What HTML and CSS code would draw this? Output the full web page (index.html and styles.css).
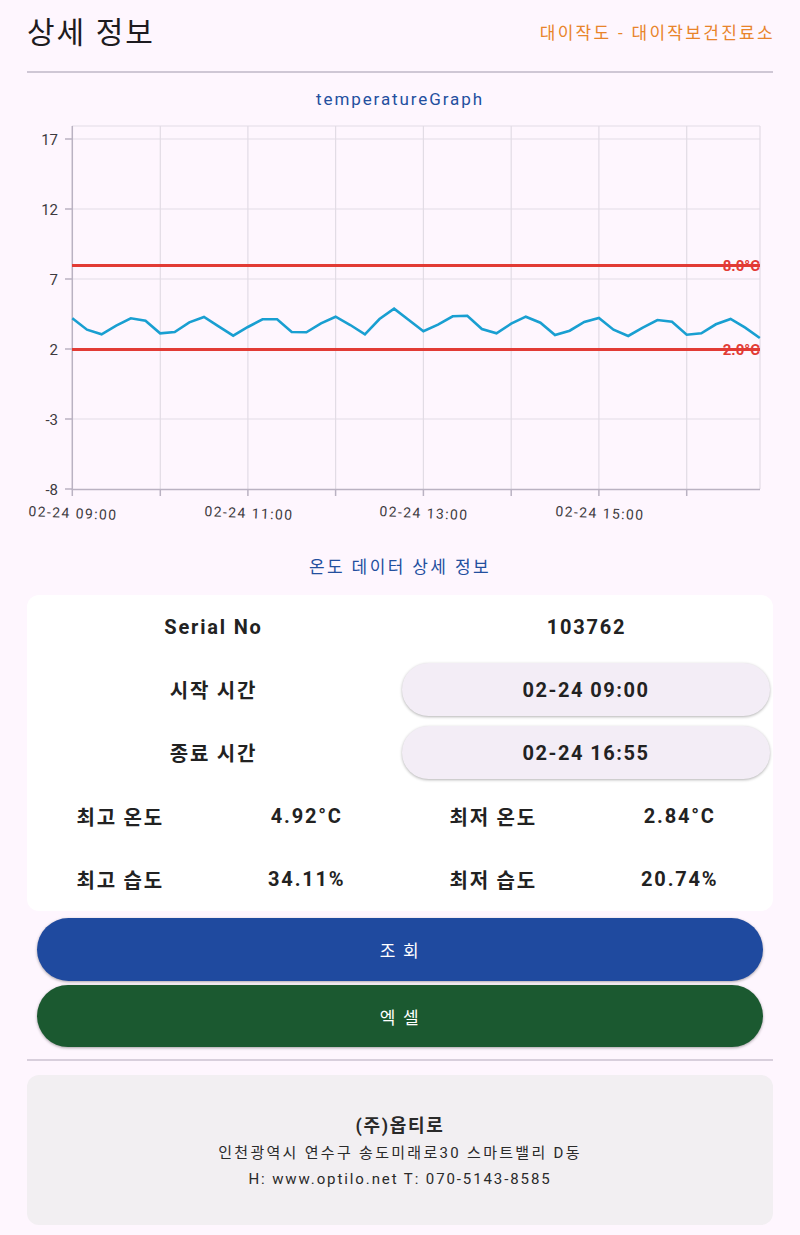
FILE: index.html
```html
<!DOCTYPE html>
<html lang="ko">
<head>
<meta charset="utf-8">
<title>상세 정보</title>
<link rel="stylesheet" href="styles.css">
</head>
<body>
<div class="page">
  <header class="header">
    <h1 class="title">상세 정보</h1>
    <div class="site">대이작도 - 대이작보건진료소</div>
  </header>

  <div class="graph-title">temperatureGraph</div>

  <svg class="chart" width="746" height="420" viewBox="27 112 746 420" xmlns="http://www.w3.org/2000/svg">
    <g class="grid">
      <line x1="72" y1="127" x2="760" y2="127"/>
      <line x1="72" y1="140" x2="760" y2="140"/>
      <line x1="72" y1="210" x2="760" y2="210"/>
      <line x1="72" y1="280" x2="760" y2="280"/>
      <line x1="72" y1="350" x2="760" y2="350"/>
      <line x1="72" y1="420" x2="760" y2="420"/>
      <line x1="160.3" y1="127" x2="160.3" y2="490"/>
      <line x1="247.9" y1="127" x2="247.9" y2="490"/>
      <line x1="335.6" y1="127" x2="335.6" y2="490"/>
      <line x1="423.4" y1="127" x2="423.4" y2="490"/>
      <line x1="511.2" y1="127" x2="511.2" y2="490"/>
      <line x1="598.9" y1="127" x2="598.9" y2="490"/>
      <line x1="686.7" y1="127" x2="686.7" y2="490"/>
      <line x1="760" y1="127" x2="760" y2="490"/>
    </g>
    <g class="axis">
      <line x1="72.3" y1="127" x2="72.3" y2="491"/>
      <line x1="72" y1="490.5" x2="760" y2="490.5"/>
      <line x1="65" y1="140" x2="72" y2="140"/>
      <line x1="65" y1="210" x2="72" y2="210"/>
      <line x1="65" y1="280" x2="72" y2="280"/>
      <line x1="65" y1="350" x2="72" y2="350"/>
      <line x1="65" y1="420" x2="72" y2="420"/>
      <line x1="65" y1="490" x2="72" y2="490"/>
      <line x1="72.3" y1="490" x2="72.3" y2="497"/>
      <line x1="160.3" y1="490" x2="160.3" y2="497"/>
      <line x1="247.9" y1="490" x2="247.9" y2="497"/>
      <line x1="335.6" y1="490" x2="335.6" y2="497"/>
      <line x1="423.4" y1="490" x2="423.4" y2="497"/>
      <line x1="511.2" y1="490" x2="511.2" y2="497"/>
      <line x1="598.9" y1="490" x2="598.9" y2="497"/>
      <line x1="686.7" y1="490" x2="686.7" y2="497"/>
    </g>
    <g class="ylabels">
      <text x="58" y="145.5">17</text>
      <text x="58" y="215.5">12</text>
      <text x="58" y="285.5">7</text>
      <text x="58" y="355.5">2</text>
      <text x="58" y="425.5">-3</text>
      <text x="58" y="495.5">-8</text>
    </g>
    <g class="xlabels">
      <text x="73" y="519" transform="rotate(2.5 72 514)">02-24 09:00</text>
      <text x="249" y="519" transform="rotate(2.5 248 514)">02-24 11:00</text>
      <text x="424" y="519" transform="rotate(2.5 423 514)">02-24 13:00</text>
      <text x="600" y="519" transform="rotate(2.5 599 514)">02-24 15:00</text>
    </g>
    <line class="limit" x1="72" y1="266.5" x2="760" y2="266.5"/>
    <line class="limit" x1="72" y1="350.5" x2="760" y2="350.5"/>
    <polyline class="temp" points="72.3,319.3 87,330.7 101.6,335.3 116.2,326.7 130.8,319.3 145.5,321.7 160.1,334.3 174.7,333 189.3,323.3 204,318 218.6,327.3 233.2,336.7 247.9,328 262.5,320.3 277.1,320.3 291.7,333 306.4,333.3 321,324.3 335.6,317.7 350.3,326 364.9,335.3 379.5,320 394.1,309.7 408.8,321 423.4,332.3 438,325.7 452.7,317.3 467.3,316.7 481.9,330 496.5,334.3 511.2,324.7 525.8,317.7 540.4,323.7 555,336 569.7,331.7 584.3,323 598.9,319 613.5,330.7 628.2,337 642.8,328.7 657.4,321 672,322.7 686.7,335.7 701.3,334.3 715.9,325.3 730.6,320 745.2,328.7 759.8,339"/>
    <text class="limit-label" x="760" y="272">8.0°C</text>
    <text class="limit-label" x="760" y="356">2.0°C</text>
  </svg>

  <div class="section-title">온도 데이터 상세 정보</div>

  <section class="card">
    <div class="row two">
      <div class="cell strong">Serial No</div>
      <div class="cell strong">103762</div>
    </div>
    <div class="row two">
      <div class="cell strong">시작 시간</div>
      <div class="cell"><div class="pill">02-24 09:00</div></div>
    </div>
    <div class="row two">
      <div class="cell strong">종료 시간</div>
      <div class="cell"><div class="pill">02-24 16:55</div></div>
    </div>
    <div class="row four">
      <div class="cell strong">최고 온도</div>
      <div class="cell strong">4.92°C</div>
      <div class="cell strong">최저 온도</div>
      <div class="cell strong">2.84°C</div>
    </div>
    <div class="row four">
      <div class="cell strong">최고 습도</div>
      <div class="cell strong">34.11%</div>
      <div class="cell strong">최저 습도</div>
      <div class="cell strong">20.74%</div>
    </div>
  </section>

  <div class="actions">
    <button class="btn btn-blue" type="button">조 회</button>
    <button class="btn btn-green" type="button">엑 셀</button>
  </div>

  <footer class="footer">
    <div class="company">(주)옵티로</div>
    <div class="addr ko">인천광역시 연수구 송도미래로30 스마트밸리 D동</div>
    <div class="addr">H: www.optilo.net T: 070-5143-8585</div>
  </footer>
</div>
</body>
</html>
```

FILE: styles.css
```css
* { box-sizing: border-box; }

html, body {
  margin: 0;
  padding: 0;
  background: #fef6fe;
}

body {
  font-family: Roboto, "Noto Sans CJK KR", sans-serif;
  color: #222;
}

.page {
  width: 800px;
  padding: 0 27px;
}

.header {
  height: 73px;
  padding-bottom: 6px;
  display: flex;
  align-items: center;
  justify-content: space-between;
  border-bottom: 2px solid #cfc7d5;
}

.title {
  margin: 0;
  font-size: 30px;
  font-weight: 400;
  color: #1d1b20;
  line-height: 36px;
  letter-spacing: 2px;
}

.site {
  font-size: 17px;
  color: #e8842a;
  line-height: 24px;
  letter-spacing: 2.3px;
  margin-right: -2px;
}

.graph-title {
  margin-top: 14px;
  text-align: center;
  font-size: 17px;
  line-height: 24px;
  color: #234f9e;
  letter-spacing: 1.9px;
}

.chart {
  display: block;
}

.grid line {
  stroke: #e2dce5;
  stroke-width: 1.2;
}

.axis line {
  stroke: #bab2c2;
  stroke-width: 1.5;
}

.ylabels text {
  font-family: Roboto, sans-serif;
  font-size: 15px;
  fill: #3d3a40;
  text-anchor: end;
}

.xlabels text {
  font-family: Roboto, sans-serif;
  font-size: 14px;
  fill: #3d3a40;
  text-anchor: middle;
  letter-spacing: 1.4px;
}

.limit {
  stroke: #e23b35;
  stroke-width: 3;
}

.limit-label {
  font-family: Roboto, sans-serif;
  font-size: 15px;
  font-weight: 700;
  fill: #e23b35;
  text-anchor: end;
}

.temp {
  fill: none;
  stroke: #199fd1;
  stroke-width: 2.6;
  stroke-linejoin: miter;
}

.section-title {
  margin-top: 24px;
  text-align: center;
  font-size: 17px;
  line-height: 24px;
  color: #234f9e;
  letter-spacing: 2.4px;
}

.card {
  margin-top: 16px;
  height: 316px;
  background: #ffffff;
  border-radius: 12px;
  display: grid;
  grid-template-rows: repeat(5, 1fr);
}

.row {
  display: grid;
  align-items: center;
}

.row.two { grid-template-columns: 1fr 1fr; }
.row.four { grid-template-columns: repeat(4, 1fr); }

.cell {
  text-align: center;
  font-size: 20px;
  color: #222;
  letter-spacing: 1.8px;
}

.strong { font-weight: 700; }

.pill {
  margin: 0 3px 0 2px;
  height: 53px;
  border-radius: 27px;
  background: #f3edf6;
  box-shadow: 0 1px 3px rgba(0, 0, 0, 0.3);
  display: flex;
  align-items: center;
  justify-content: center;
  font-weight: 700;
  font-size: 20px;
  color: #222;
  letter-spacing: 1.5px;
}

.actions {
  margin-top: 7px;
  padding: 0 10px;
  display: flex;
  flex-direction: column;
  gap: 4px;
  padding-bottom: 12px;
  border-bottom: 2px solid #d8cfdc;
}

.btn {
  height: 63px;
  border: none;
  border-radius: 32px;
  color: #ffffff;
  font-family: Roboto, "Noto Sans CJK KR", sans-serif;
  font-size: 17px;
  letter-spacing: 1.7px;
  box-shadow: 0 1px 3px rgba(0, 0, 0, 0.35);
}

.btn-blue { background: #1f4a9f; }
.btn-green { background: #1b5930; height: 62px; }

.footer {
  margin-top: 14px;
  height: 150px;
  border-radius: 12px;
  background: #f2eff2;
  display: flex;
  flex-direction: column;
  align-items: center;
  justify-content: center;
  padding-top: 4px;
  color: #2a2a2a;
}

.company {
  font-size: 18px;
  font-weight: 700;
  line-height: 28px;
  letter-spacing: 1.7px;
}

.addr {
  font-size: 15px;
  line-height: 26px;
  letter-spacing: 1.9px;
}

.addr.ko {
  letter-spacing: 2.3px;
}
```
